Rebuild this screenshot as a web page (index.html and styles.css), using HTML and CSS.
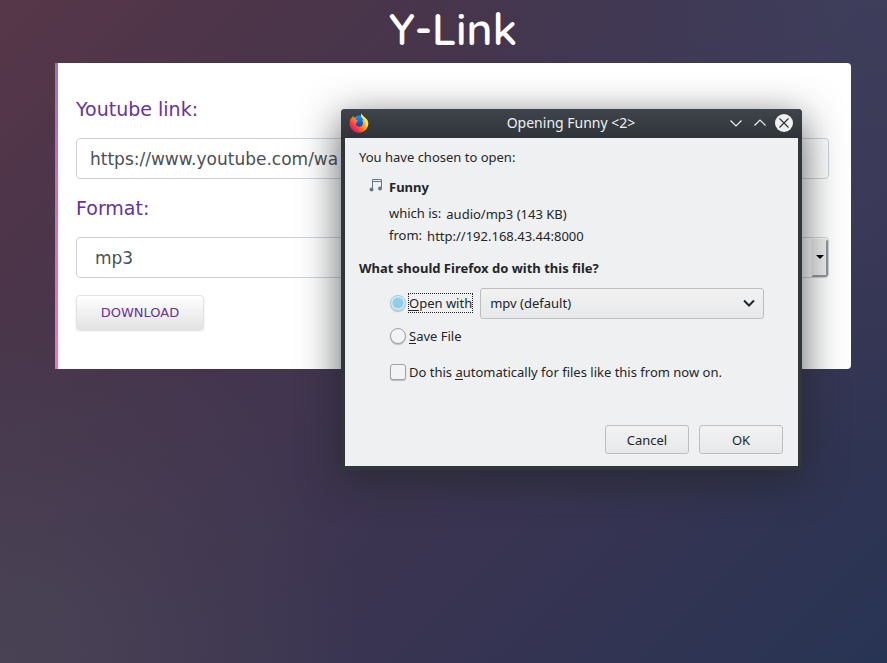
FILE: index.html
```html
<!DOCTYPE html>
<html lang="en">
<head>
<meta charset="utf-8">
<title>Y-Link</title>
<meta name="viewport" content="width=device-width, initial-scale=1">
<link rel="stylesheet" href="styles.css">
</head>
<body>
<main class="page">
  <h1 class="title">Y-Link</h1>
  <form class="card">
    <label class="field-label" for="link">Youtube link:</label>
    <input class="field" id="link" type="text" value="https://www.youtube.com/wa">
    <label class="field-label" for="format">Format:</label>
    <div class="select-wrap">
      <select class="field field-select" id="format"><option>mp3</option></select>
      <span class="drop-button" aria-hidden="true"></span>
    </div>
    <button class="download" type="button">DOWNLOAD</button>
  </form>
</main>

<section class="dialog" role="dialog" aria-labelledby="dialog-title">
  <header class="titlebar">
    <svg class="firefox" viewBox="0 0 20 20" aria-hidden="true">
      <defs>
        <linearGradient id="flame" x1="0.9" y1="0.1" x2="0.15" y2="0.85">
          <stop offset="0" stop-color="#fff44f"/>
          <stop offset="0.35" stop-color="#ffb82e"/>
          <stop offset="0.6" stop-color="#ff7a1c"/>
          <stop offset="0.85" stop-color="#ff2f3d"/>
          <stop offset="1" stop-color="#e61587"/>
        </linearGradient>
        <linearGradient id="globe" x1="0.5" y1="0" x2="0.5" y2="1">
          <stop offset="0" stop-color="#0a9cf0"/>
          <stop offset="0.6" stop-color="#1459d0"/>
          <stop offset="1" stop-color="#3a2a86"/>
        </linearGradient>
      </defs>
      <circle cx="10" cy="9" r="6.500" fill="url(#globe)"/>
      <path fill="url(#flame)" d="M12.600.500c.3 1.600 1.200 2.200 2.300 3.200 2.800 2 4.600 4.200 4.400 7.300-.3 5-4.300 8.700-9.300 8.700S.7 15.800.7 10.800c0-2.800.5-4.900 1.500-6.200l.5 1.500C3 4.700 3.400 3.300 4.200 2.600l.5 2.300c1-.3 2-.2 2.900.2-.9.700-1.100 1.300-.9 2 .8.3 1.800.1 2.200.4-.2.900-1.400 1.200-1.600 2.100-.1.900 0 1.500-.7 1.900 1 1.700 3 2.700 5 2 1.500-.5 2.400-1.800 2.400-3.500 0-1.300-.4-2.200-1.100-2.900.8.100 1.400.5 1.700 1-.3-3-2.700-3.600-2.600-6 .1-.6.300-1.200.6-1.600z"/>
      <path fill="#ffe84a" d="M12.600.500c.3 1.600 1.200 2.200 2.300 3.200 2.600 1.900 4.200 3.800 4.300 6.200-.2 2-1.200 3.600-2.700 4.400 1-2 .7-4.400-.6-6.200-1.700-2.500-4-3.300-3.900-6 .1-.6.300-1.200.6-1.600z" opacity=".85"/>
    </svg>
    <h2 class="dialog-title" id="dialog-title">Opening Funny &lt;2&gt;</h2>
    <div class="window-buttons">
      <button class="window-button" type="button" aria-label="Minimize"><svg viewBox="0 0 18 18"><path d="M3.500 6.500 9 12l5.500-5.500"/></svg></button>
      <button class="window-button" type="button" aria-label="Maximize"><svg viewBox="0 0 18 18"><path d="M3.500 11.500 9 6l5.500 5.500"/></svg></button>
      <button class="window-button close" type="button" aria-label="Close"><svg viewBox="0 0 18 18"><path d="m4.500 4.500 9 9m0-9-9 9"/></svg></button>
    </div>
  </header>
  <div class="dialog-body">
    <p class="line">You have chosen to open:</p>
    <div class="file">
      <svg class="note" viewBox="0 0 14 14" aria-hidden="true">
        <path d="M3.500 11V1.500h9V10M3.500 3.500h9" fill="none" stroke="#6b7684"/>
        <circle cx="2.500" cy="11.500" r="2" fill="#6b7684"/><circle cx="11" cy="10.500" r="2" fill="#6b7684"/>
      </svg>
      <strong class="file-name">Funny</strong>
      <dl class="facts">
        <div class="fact"><dt>which is:</dt><dd>audio/mp3 (143 KB)</dd></div>
        <div class="fact"><dt>from:</dt><dd>http://192.168.43.44:8000</dd></div>
      </dl>
    </div>
    <p class="question">What should Firefox do with this file?</p>
    <div class="choices">
      <div class="choice choice-open">
        <input class="radio" type="radio" name="action" id="open" checked>
        <label class="focused" for="open"><u>O</u>pen with</label>
        <div class="app-wrap">
          <select class="app" aria-label="Application"><option>mpv (default)</option></select>
          <svg class="app-arrow" viewBox="0 0 12 8" aria-hidden="true"><path d="m1 1.500 5 5 5-5"/></svg>
        </div>
      </div>
      <div class="choice choice-save">
        <input class="radio" type="radio" name="action" id="save">
        <label for="save"><u>S</u>ave File</label>
      </div>
      <div class="choice choice-auto">
        <input class="check" type="checkbox" id="auto">
        <label for="auto">Do this <u>a</u>utomatically for files like this from now on.</label>
      </div>
    </div>
    <div class="actions">
      <button class="action" type="button">Cancel</button>
      <button class="action" type="button">OK</button>
    </div>
  </div>
</section>
</body>
</html>
```
FILE: styles.css
```css
* { box-sizing: border-box; }

body {
  margin: 0;
  min-height: 100vh;
  font-family: "DejaVu Sans", sans-serif;
  background:
    radial-gradient(circle at 0 100%, rgba(74, 68, 85, 0.9), rgba(74, 68, 85, 0) 360px),
    radial-gradient(circle at 100% 0, rgba(62, 64, 94, 0.8), rgba(62, 64, 94, 0) 440px),
    linear-gradient(135deg, #573649 0%, #4a354a 22%, #403550 48%, #363452 72%, #283454 100%);
}

.page { padding: 0 36px 0 55px; }

.title {
  margin: 0;
  padding: 1px 0 6px;
  color: #fff;
  font: 600 44px/56px Quicksand, Comfortaa, Lato, sans-serif;
  text-align: center;
}

.card {
  padding: 31px 22px 39px 18px;
  background: #fff;
  border-left: 3px solid;
  border-image: linear-gradient(#9b74b8, #ff6fae) 1;
  clip-path: inset(0 round 0 4px 4px 0);
}

.field-label {
  display: block;
  margin-bottom: 14px;
  color: #663399;
  font-size: 19px;
  line-height: 30px;
}

.field {
  display: block;
  width: 100%;
  height: 41px;
  margin: 0 0 14px;
  padding: 0 13px;
  color: #495057;
  background: #fff;
  border: 1px solid #ced4da;
  border-radius: 4px;
  font: 17px "DejaVu Sans", sans-serif;
}

.select-wrap { position: relative; margin-bottom: 17px; }
.field-select { margin: 0; padding: 0 18px; appearance: none; }

.drop-button {
  position: absolute;
  top: 2px;
  right: 1px;
  width: 17px;
  height: 38px;
  background: #efefef;
  border: 2px solid #959595;
  border-top-color: #efefef;
  border-left-color: #efefef;
  border-radius: 0 3px 3px 0;
}
.drop-button::after {
  content: "";
  position: absolute;
  top: 14px;
  left: 3px;
  border: 4px solid transparent;
  border-top-color: #000;
  border-bottom: 0;
}

.download {
  display: block;
  width: 128px;
  height: 35px;
  padding: 0;
  color: #663399;
  background: linear-gradient(#fff, #e3e3e3);
  border: 1px solid #e3e3e3;
  border-radius: 4px;
  box-shadow: 0 1px 2px #ddd;
  font: 13px "DejaVu Sans", sans-serif;
}

.dialog {
  position: absolute;
  top: 109px;
  left: 341px;
  width: 461px;
  padding: 0 4px 4px;
  color: #232629;
  background: #31363b;
  border-radius: 4px 4px 0 0;
  box-shadow: 0 10px 40px rgba(35, 38, 41, 0.75);
  font: 13px/18px "Noto Sans", sans-serif;
}

.titlebar {
  display: grid;
  grid-template-columns: 66px 1fr 66px;
  align-items: center;
  height: 29px;
  margin: 0 -4px;
  padding: 0 9px 2px 8px;
  background: linear-gradient(#3e444b, #2f3439);
  border-radius: 4px 4px 0 0;
}
.firefox { width: 20px; height: 20px; }
.dialog-title { margin: 0; color: #eff0f1; font-size: 14px; font-weight: 400; text-align: center; }
.window-buttons { display: flex; justify-content: flex-end; gap: 6px; }
.window-button { width: 18px; height: 18px; padding: 0; background: none; border: 0; border-radius: 50%; }
.window-button svg { display: block; fill: none; stroke: #eff0f1; stroke-width: 1.2; }
.window-button.close { background: #eff0f1; }
.window-button.close svg { stroke: #31363b; }

.dialog-body { padding: 10px 15px 12px 14px; background: #eff0f1; }
.line, .question { margin: 0; }
.file { display: grid; grid-template-columns: 30px 1fr; padding-top: 12px; }
.note { width: 14px; height: 14px; margin-left: 10px; }
.facts { grid-column: 2; margin: 8px 0 0; }
.fact { display: flex; gap: 5px; height: 22px; }
.fact dd { margin: 0; padding-top: 1px; }
.question { padding-top: 11px; font-weight: 700; }

.choices { padding: 10px 19px 0 31px; }
.choice { display: flex; align-items: center; gap: 3px; }
.choice-open { height: 32px; }
.choice-save { margin-top: 8px; }
.choice-auto { margin-top: 18px; }
.choice label { line-height: 18px; }
.choice .focused { margin-right: 5px; outline: 1px dotted #232629; }

u { text-decoration: none; box-shadow: inset 0 -1px #232629; line-height: 15px; display: inline-block; }

.radio, .check {
  flex: none;
  width: 16px;
  height: 16px;
  margin: 0;
  appearance: none;
  background: #f2f3f4;
  border: 1px solid #a0a3a5;
  border-radius: 50%;
  box-shadow: 0 1px 1px #b8babc;
}
.check { border-radius: 3px; }
.radio:checked {
  background: radial-gradient(circle, #93cee9 5px, #dfeaf0 6px);
  border-color: #93cee9;
}

.app-wrap { position: relative; flex: 1; }
.app {
  display: block;
  width: 100%;
  height: 31px;
  padding: 0 9px;
  color: #232629;
  appearance: none;
  background: linear-gradient(#f2f2f3, #e7e8e9);
  border: 1px solid #bcbebf;
  border-radius: 3px;
  font: 13px "Noto Sans", sans-serif;
}
.app-arrow {
  position: absolute;
  top: 11px;
  right: 9px;
  width: 12px;
  height: 8px;
  fill: none;
  stroke: #232629;
  stroke-width: 2;
}

.actions { display: flex; justify-content: flex-end; gap: 10px; padding-top: 44px; }
.action {
  width: 84px;
  height: 29px;
  padding: 0;
  color: #232629;
  background: linear-gradient(#f2f2f3, #e7e8e9);
  border: 1px solid #bcbebf;
  border-radius: 3px;
  font: 13px "Noto Sans", sans-serif;
}
```
